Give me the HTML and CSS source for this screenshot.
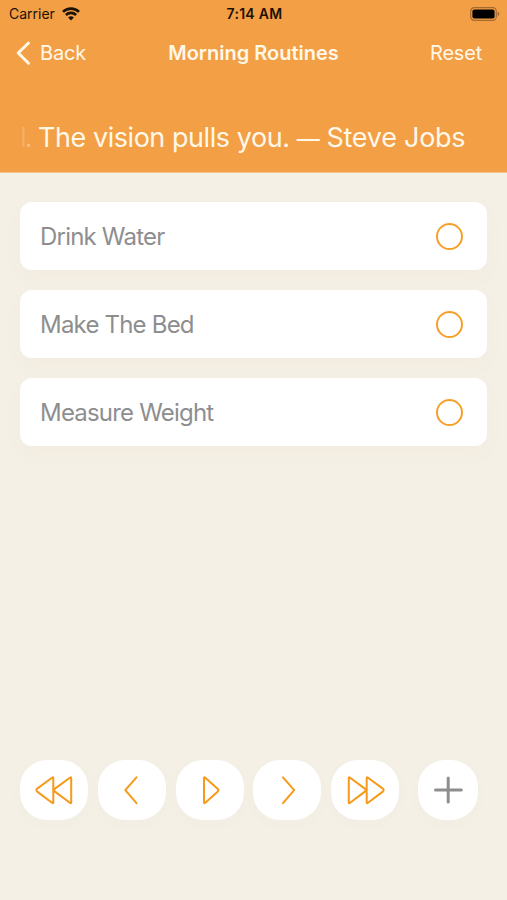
FILE: index.html
```html
<!DOCTYPE html>
<html lang="en">
<head>
  <meta charset="UTF-8" />
  <meta name="viewport" content="width=device-width, initial-scale=1" />
  <title>Morning Routines</title>
  <link rel="stylesheet" href="styles.css">
</head>
<body>
  <header class="header">
    <div class="status-bar">
      <div class="carrier">
        <span>Carrier</span>
        <svg class="wifi" viewBox="0 0 18 14" aria-hidden="true">
          <path d="M1 4.9a11.4 11.4 0 0 1 16 0" />
          <path d="M3.9 8a7.3 7.3 0 0 1 10.2 0" />
          <path class="dot" d="M9 13.6l-2.9-3a4.2 4.2 0 0 1 5.8 0z" />
        </svg>
      </div>
      <span class="time">7:14 AM</span>
      <svg class="battery" viewBox="0 0 30 14" aria-hidden="true">
        <rect class="shell" x="0.7" y="0.7" width="25.6" height="12.6" rx="3.6" />
        <rect x="2.4" y="2.4" width="22.2" height="9.2" rx="2" />
        <path class="cap" d="M27.6 4.6v4.8c1-.4 1.7-1.3 1.7-2.4s-.7-2-1.7-2.4z" />
      </svg>
    </div>
    <nav class="nav-bar">
      <button type="button" class="back">
        <svg viewBox="0 0 16 26" aria-hidden="true"><path d="M13.5 3 3.2 13l10.300 10.200" /></svg>
        <span>Back</span>
      </button>
      <h1 class="title">Morning Routines</h1>
      <button type="button" class="reset">Reset</button>
    </nav>
    <div class="quote">
      <span class="faded">l.</span>
      <p>The vision pulls you. <span class="dash">—</span> <span class="author">Steve Jobs</span></p>
    </div>
  </header>

  <main class="tasks">
    <div class="task">
      <span>Drink Water</span>
      <span class="check"></span>
    </div>
    <div class="task">
      <span>Make The Bed</span>
      <span class="check"></span>
    </div>
    <div class="task">
      <span>Measure Weight</span>
      <span class="check"></span>
    </div>
  </main>

  <footer class="controls">
    <button type="button" aria-label="First">
      <svg viewBox="0 0 68 60"><path d="M32.300 17.500 17.200 28.600q-1.700 1.500 0 3L32.300 43q1 .6 1-.6V18.100q0-1.200-1-.6zM50.200 17.500 35 28.600q-1.700 1.500 0 3L50.200 43q1 .6 1-.6V18.100q0-1.200-1-.6z" /></svg>
    </button>
    <button type="button" aria-label="Previous">
      <svg viewBox="0 0 68 60"><path d="M38.500 17.300 27.300 30.200l11.200 13" /></svg>
    </button>
    <button type="button" aria-label="Play">
      <svg viewBox="0 0 68 60"><path d="M29 17.500 41.600 28.700q1.500 1.500 0 3L29 43q-1 .6-1-.6V18.100q0-1.200 1-.6z" /></svg>
    </button>
    <button type="button" aria-label="Next">
      <svg viewBox="0 0 68 60"><path d="M30 17.300 41.200 30.200 30 43.200" /></svg>
    </button>
    <button type="button" aria-label="Last">
      <svg viewBox="0 0 68 60"><path d="M18.800 17.500 33.800 28.600q1.700 1.500 0 3L18.800 43q-1 .6-1-.6V18.100q0-1.200 1-.6zM36.700 17.500 51.800 28.600q1.700 1.500 0 3L36.700 43q-1 .6-1-.6V18.100q0-1.200 1-.6z" /></svg>
    </button>
    <button type="button" class="add" aria-label="Add">
      <svg viewBox="0 0 60 60"><path d="M30.200 18v24M17.500 30h25.800" /></svg>
    </button>
  </footer>
</body>
</html>
```
FILE: styles.css
```css
*, *::before, *::after {
  box-sizing: border-box;
}
body {
  margin: 0;
  height: 900px;
  display: flex;
  flex-direction: column;
  overflow: hidden;
  background: #f5f0e5;
  font-family: Inter, "Liberation Sans", sans-serif;
}
button {
  border: none;
  padding: 0;
  background: none;
  color: inherit;
  font: inherit;
  letter-spacing: inherit;
}
svg {
  display: block;
  fill: none;
  stroke-linecap: round;
  stroke-linejoin: round;
}

/* Header */
.header {
  height: 173px;
  background: #f39f45;
  color: #fff8e9;
  border-bottom: 1px solid #f6c58f;
}
.status-bar {
  height: 27px;
  padding: 0 7px 0 9px;
  display: grid;
  grid-template-columns: 1fr auto 1fr;
  align-items: center;
  color: #1c1208;
  font-size: 14px;
}
.carrier {
  display: flex;
  align-items: center;
  gap: 7px;
}
.wifi {
  width: 18px;
  height: 14px;
  stroke: #1c1208;
  stroke-width: 2.6;
  stroke-linecap: butt;
}
.wifi .dot {
  fill: #1c1208;
  stroke: none;
}
.time {
  font-weight: 600;
  letter-spacing: 0.3px;
}
.battery {
  width: 30px;
  height: 14px;
  justify-self: end;
  fill: #000;
}
.battery .shell {
  fill: none;
  stroke: #a56a2d;
  stroke-width: 1.2;
}
.battery .cap {
  fill: #a56a2d;
}
.nav-bar {
  height: 51px;
  padding: 0 15px;
  display: grid;
  grid-template-columns: 1fr auto 1fr;
  align-items: center;
  font-size: 20px;
  letter-spacing: -0.2px;
}
.back {
  display: flex;
  align-items: center;
  gap: 9px;
}
.back svg {
  width: 16px;
  height: 26px;
  stroke: #fff8e9;
  stroke-width: 3;
}
.title {
  margin: 0;
  font-size: 20px;
  font-weight: 600;
  letter-spacing: 0;
}
.reset {
  justify-self: end;
  margin-right: 10px;
}
.quote {
  height: 93px;
  padding: 25px 20px 0;
  display: flex;
  align-items: center;
  gap: 6px;
  white-space: nowrap;
  font-size: 27px;
  letter-spacing: -0.45px;
}
.quote p {
  margin: 0;
}
.dash {
  font-size: 23px;
}
.author {
  letter-spacing: -0.25px;
}
/* The end of the scrolled-out text */
.faded {
  width: 12px;
  letter-spacing: -2px;
  color: transparent;
  background: linear-gradient(90deg, #f4a653, #fac88f);
  -webkit-background-clip: text;
  background-clip: text;
}

/* Task cards */
.tasks {
  padding: 29px 20px 0;
  display: flex;
  flex-direction: column;
  gap: 20px;
}
.task {
  height: 68px;
  padding: 0 24px 0 20px;
  display: flex;
  align-items: center;
  justify-content: space-between;
  border-radius: 12px;
  background: #fff;
  box-shadow: 0 8px 20px rgba(120, 110, 80, 0.03);
  color: #8e8e8f;
  font-size: 24px;
  letter-spacing: -0.8px;
}
.check {
  width: 27px;
  height: 27px;
  border: 2px solid #f5a02c;
  border-radius: 50%;
}

/* Bottom controls */
.controls {
  margin-top: auto;
  padding: 0 29px 80px 20px;
  display: flex;
  gap: 9.8px;
}
.controls button {
  width: 68px;
  height: 60px;
  border-radius: 27px;
  background: #fff;
  box-shadow: 0 4px 16px rgba(120, 110, 80, 0.02);
}
.controls svg {
  width: 100%;
  height: 100%;
  stroke: #f59a1b;
  stroke-width: 2;
}
.controls .add {
  width: 60px;
  margin-left: auto;
}
.controls .add svg {
  stroke: #8e8e8f;
  stroke-width: 3;
}
```
